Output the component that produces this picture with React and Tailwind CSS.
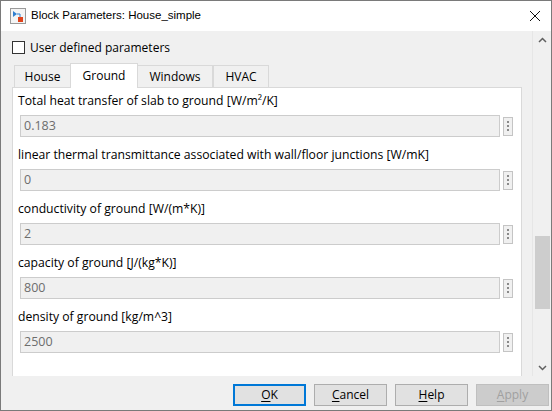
import React from "react";

const fields = [
  { label: "Total heat transfer of slab to ground [W/m²/K]", value: "0.183" },
  { label: "linear thermal transmittance associated with wall/floor junctions [W/mK]", value: "0" },
  { label: "conductivity of ground [W/(m*K)]", value: "2" },
  { label: "capacity of ground [J/(kg*K)]", value: "800" },
  { label: "density of ground [kg/m^3]", value: "2500" },
];

const tabs = ["House", "Ground", "Windows", "HVAC"];

const BlockIcon = () => (
  <svg width="16" height="16" viewBox="0 0 16 16">
    <rect x="0.5" y="0.5" width="15" height="15" fill="#f4f4f4" stroke="#9a9a9a" />
    <path d="M3 3 L3 9 L7 6 Z" fill="#2f7fd0" />
    <path d="M7 6 H10 V9" fill="none" stroke="#2f7fd0" strokeWidth="1" />
    <rect x="8" y="9" width="5" height="5" fill="#e0431b" />
  </svg>
);

const DotsButton = () => (
  <div className="w-[10px] h-[19px] border border-[#c4c4c4] bg-[#f0f0f0] flex flex-col items-center justify-center gap-[2px]">
    <div className="w-[2px] h-[2px] bg-[#8a8a8a]" />
    <div className="w-[2px] h-[2px] bg-[#8a8a8a]" />
    <div className="w-[2px] h-[2px] bg-[#8a8a8a]" />
  </div>
);

const Button = ({ mnemonic, rest, primary, disabled }) => (
  <div
    className={
      "w-[73px] h-[22px] flex items-center justify-center text-[12px] " +
      (primary
        ? "border-2 border-[#0078d7] bg-[#e1e1e1] text-black"
        : disabled
        ? "border border-[#bfbfbf] bg-[#cccccc] text-[#a0a0a0]"
        : "border border-[#adadad] bg-[#e1e1e1] text-black")
    }
  >
    <span>
      <span className="underline underline-offset-2">{mnemonic}</span>
      {rest}
    </span>
  </div>
);

export default function App() {
  return (
    <div
      className="w-[552px] h-[411px] border border-[#7a7a7a] bg-[#f0f0f0] flex flex-col overflow-hidden text-black"
      style={{ fontFamily: '"Open Sans", "Noto Sans", sans-serif' }}
    >
      {/* Title bar */}
      <div className="h-[30px] bg-white flex items-center shrink-0">
        <div className="ml-[9px] mr-[5px] flex items-center">
          <BlockIcon />
        </div>
        <span className="text-[11.5px] font-['Liberation_Sans',Arial,sans-serif]">
          Block Parameters: House_simple
        </span>
        <div className="ml-auto mr-[9px] w-[14px] h-[14px] flex items-center justify-center">
          <svg width="12" height="12" viewBox="0 0 12 12">
            <path d="M1 1 L11 11 M11 1 L1 11" stroke="#111" strokeWidth="1" />
          </svg>
        </div>
      </div>

      {/* Body */}
      <div className="flex flex-1 min-h-0">
        <div className="flex-1 flex flex-col pl-[11px] pr-[10px]">
          <div className="flex items-center h-[13px] mt-[10px] mb-[9px]">
            <div className="w-[13px] h-[13px] border border-[#333] bg-white" />
            <span className="ml-[5px] text-[12px]">User defined parameters</span>
          </div>

          <div className="flex items-end h-[24px] pl-[2px]">
            {tabs.map((t) =>
              t === "Ground" ? (
                <div
                  key={t}
                  className="h-[25px] w-[68px] bg-white border border-b-0 border-[#d9d9d9] flex items-center justify-center text-[12px] relative top-[1px] -mx-px z-10"
                >
                  {t}
                </div>
              ) : (
                <div
                  key={t}
                  className={
                    "h-[22px] bg-[#f0f0f0] border border-b-0 border-[#d9d9d9] flex items-center justify-center text-[12px] " +
                    (t === "House" ? "w-[57px]" : t === "Windows" ? "w-[76px]" : "w-[56px]")
                  }
                >
                  {t}
                </div>
              )
            )}
          </div>

          <div className="flex-1 bg-white border border-b-0 border-[#d9d9d9] pl-[5px] pt-[5px]">
            {fields.map((f) => (
              <div key={f.label} className="h-[54px] flex flex-col">
                <div className="h-[17px] flex items-center text-[12.2px] whitespace-nowrap">{f.label}</div>
                <div className="flex items-center mt-[5px] ml-[2px]">
                  <div className="w-[480px] h-[22px] border border-[#cccccc] bg-[#f0f0f0] flex items-center pl-[3px] text-[12.5px] text-[#6d6d6d]">
                    {f.value}
                  </div>
                  <div className="ml-[3px]">
                    <DotsButton />
                  </div>
                </div>
              </div>
            ))}
          </div>
        </div>

        {/* Scrollbar */}
        <div className="w-[19px] border-l border-[#e6e6e6] bg-[#f0f0f0] flex flex-col items-center">
          <div className="h-[17px] flex items-center justify-center">
            <svg width="9" height="6" viewBox="0 0 9 6">
              <path d="M1 5 L4.5 1.5 L8 5" fill="none" stroke="#606060" strokeWidth="1.5" />
            </svg>
          </div>
          <div className="w-[15px] h-[73px] bg-[#cdcdcd] mt-[188px]" />
          <div className="mt-auto h-[17px] flex items-center justify-center">
            <svg width="9" height="6" viewBox="0 0 9 6">
              <path d="M1 1 L4.5 4.5 L8 1" fill="none" stroke="#606060" strokeWidth="1.5" />
            </svg>
          </div>
        </div>
      </div>

      {/* Buttons */}
      <div className="h-[34px] shrink-0 flex justify-end items-start pt-[8px] pr-[2px] gap-[8px]">
        <Button mnemonic="O" rest="K" primary />
        <Button mnemonic="C" rest="ancel" />
        <Button mnemonic="H" rest="elp" />
        <Button mnemonic="A" rest="pply" disabled />
      </div>
    </div>
  );
}
